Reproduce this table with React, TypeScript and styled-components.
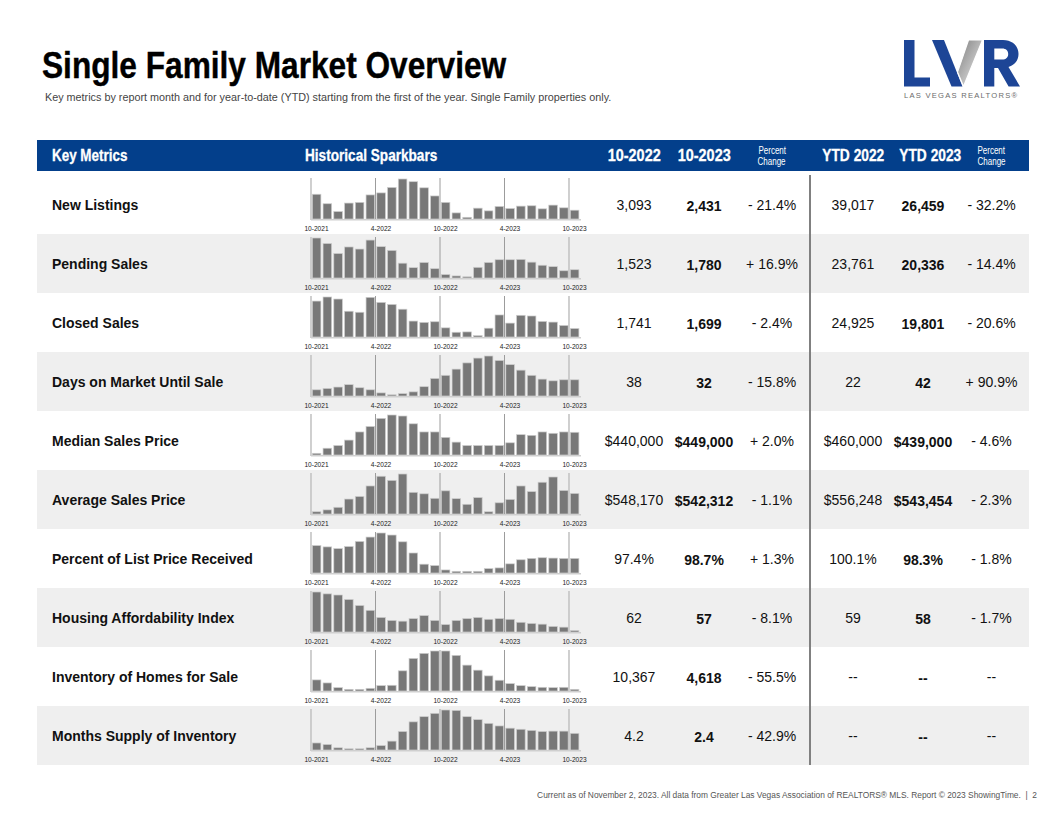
import React from "react";
import styled, { createGlobalStyle } from "styled-components";

const SANS = `"Liberation Sans", Arial, Helvetica, sans-serif`;
const BLUE = "#033f8b";

const Global = createGlobalStyle`
  html, body { margin: 0; padding: 0; background: #ffffff; }
  body { font-family: ${SANS}; color: #111; }
  * { box-sizing: border-box; }
`;

const Page = styled.div`
  width: 1064px;
  height: 816px;
  background: #fff;
  overflow: hidden;
`;

const TopBar = styled.header`
  height: 140px;
  display: flex;
  justify-content: space-between;
  align-items: flex-start;
  padding: 46px 42px 0 42px;
`;

const TitleBlock = styled.div`
  display: flex;
  flex-direction: column;
  align-items: flex-start;
`;

/* condensed type: the reference uses a condensed grotesque; we narrow Liberation Sans */
const Squeeze = styled.span<{ $s: number; $origin?: string }>`
  display: inline-block;
  transform: scaleX(${(p) => p.$s});
  transform-origin: ${(p) => p.$origin ?? "center"};
  white-space: nowrap;
`;

const Title = styled.h1`
  margin: 0;
  font-weight: 700;
  font-size: 37px;
  line-height: 40px;
  color: #000;
  white-space: nowrap;
  -webkit-text-stroke: 0.4px #000;
`;

const Subtitle = styled.p`
  margin: 5px 0 0 3px;
  font-size: 10.8px;
  line-height: 12px;
  color: #444;
  white-space: nowrap;
`;

const Logo = styled.div`
  display: flex;
  flex-direction: column;
  align-items: flex-start;
  margin-top: -6px;
`;

const LogoText = styled.div`
  margin: 4px 0 0 2px;
  font-size: 7.6px;
  line-height: 9px;
  letter-spacing: 1.25px;
  color: #6b6b6b;
  white-space: nowrap;
`;

const COLS = "263px 298px 72px 68px 68px 8px 78px 62px 75px";

const Table = styled.section`
  margin-left: 37px;
  width: 992px;
`;

const HeadRow = styled.div`
  display: grid;
  grid-template-columns: ${COLS};
  height: 31px;
  background: ${BLUE};
  color: #fff;
  align-items: center;
  margin-bottom: 4px;
`;

const HeadCell = styled.div<{ $align?: "left" | "center"; $pad?: number }>`
  font-weight: 700;
  font-size: 17px;
  text-align: ${(p) => p.$align ?? "center"};
  padding-left: ${(p) => p.$pad ?? 0}px;
  white-space: nowrap;
  padding-top: 1px;
  -webkit-text-stroke: 0.3px #fff;
`;

const HeadSmall = styled.div`
  font-size: 10px;
  line-height: 11px;
  text-align: center;
  margin-top: 0px;
`;

const Row = styled.div<{ $alt: boolean }>`
  display: grid;
  grid-template-columns: ${COLS};
  height: 59px;
  align-items: center;
  background: ${(p) => (p.$alt ? "#efefef" : "transparent")};
`;

const Label = styled.div`
  padding-left: 15px;
  padding-top: 1px;
  font-weight: 700;
  font-size: 14px;
  color: #111;
  white-space: nowrap;
`;

const Spark = styled.div`
  height: 59px;
`;

const Value = styled.div<{ $bold?: boolean }>`
  text-align: center;
  font-size: 14px;
  font-weight: ${(p) => (p.$bold ? 700 : 400)};
  color: #111;
  white-space: nowrap;
  padding-top: ${(p) => (p.$bold ? 3 : 0)}px;
`;

const Divider = styled.div`
  height: 100%;
  display: flex;
  justify-content: center;
`;

const DividerLine = styled.div`
  width: 2px;
  height: 100%;
  background: #808080;
`;

const Footer = styled.footer`
  margin-top: 25px;
  padding-right: 27px;
  text-align: right;
  font-size: 8.4px;
  color: #555;
  white-space: nowrap;
`;

type RowData = {
  label: string;
  bars: number[];
  v: [string, string, string, string, string, string];
};

const rows: RowData[] = [
  {
    label: "New Listings",
    bars: [73, 45, 22, 47, 49, 71, 77, 93, 118, 110, 92, 68, 49, 18, 5, 32, 24, 37, 31, 38, 39, 30, 41, 33, 26],
    v: ["3,093", "2,431", "- 21.4%", "39,017", "26,459", "- 32.2%"],
  },
  {
    label: "Pending Sales",
    bars: [116, 100, 71, 90, 84, 110, 91, 80, 43, 30, 45, 27, 10, 6, 3, 31, 45, 53, 53, 54, 46, 37, 33, 21, 24],
    v: ["1,523", "1,780", "+ 16.9%", "23,761", "20,336", "- 14.4%"],
  },
  {
    label: "Closed Sales",
    bars: [106, 118, 112, 76, 73, 117, 102, 96, 82, 47, 43, 45, 27, 14, 15, 4, 26, 65, 41, 64, 62, 46, 44, 34, 25],
    v: ["1,741", "1,699", "- 2.4%", "24,925", "19,801", "- 20.6%"],
  },
  {
    label: "Days on Market Until Sale",
    bars: [18, 22, 26, 33, 24, 18, 9, 3, 7, 12, 27, 51, 60, 78, 96, 110, 116, 103, 91, 75, 60, 49, 44, 47, 47],
    v: ["38", "32", "- 15.8%", "22", "42", "+ 90.9%"],
  },
  {
    label: "Median Sales Price",
    bars: [5, 20, 28, 44, 68, 84, 108, 118, 115, 92, 68, 68, 52, 38, 28, 28, 28, 28, 36, 60, 58, 68, 64, 68, 67],
    v: ["$440,000", "$449,000", "+ 2.0%", "$460,000", "$439,000", "- 4.6%"],
  },
  {
    label: "Average Sales Price",
    bars: [6, 11, 18, 40, 47, 75, 101, 90, 107, 58, 54, 42, 62, 41, 26, 44, 6, 30, 39, 75, 60, 85, 99, 63, 55],
    v: ["$548,170", "$542,312", "- 1.1%", "$556,248", "$543,454", "- 2.3%"],
  },
  {
    label: "Percent of List Price Received",
    bars: [81, 77, 72, 78, 93, 106, 118, 112, 92, 59, 26, 22, 9, 5, 5, 5, 13, 15, 27, 39, 43, 45, 44, 43, 43],
    v: ["97.4%", "98.7%", "+ 1.3%", "100.1%", "98.3%", "- 1.8%"],
  },
  {
    label: "Housing Affordability Index",
    bars: [107, 102, 99, 87, 71, 58, 39, 31, 29, 36, 44, 31, 20, 31, 36, 39, 34, 36, 34, 26, 23, 21, 15, 13, 4],
    v: ["62", "57", "- 8.1%", "59", "58", "- 1.7%"],
  },
  {
    label: "Inventory of Homes for Sale",
    bars: [33, 24, 10, 5, 5, 8, 16, 17, 60, 97, 112, 119, 119, 106, 77, 62, 45, 32, 22, 16, 13, 11, 10, 11, 5],
    v: ["10,367", "4,618", "- 55.5%", "--", "--", "--"],
  },
  {
    label: "Months Supply of Inventory",
    bars: [19, 15, 6, 3, 3, 6, 12, 24, 50, 76, 90, 99, 108, 107, 90, 82, 72, 65, 59, 56, 53, 50, 51, 51, 45],
    v: ["4.2", "2.4", "- 42.9%", "--", "--", "--"],
  },
];

const GRID_X = [11, 75.5, 140, 204.5, 269];
const TICKS = ["10-2021", "4-2022", "10-2022", "4-2023", "10-2023"];

function Sparkbars({ bars }: { bars: number[] }) {
  const max = Math.max(...bars);
  const base = 44;
  const full = 40;
  return (
    <svg width={298} height={59} viewBox="0 0 298 59">
      {GRID_X.map((x, i) => (
        <line
          key={"g" + i}
          x1={x}
          x2={x}
          y1={3}
          y2={base + 1}
          stroke={i === 0 || i === 4 ? "#c4c4c4" : "#9c9c9c"}
          strokeWidth={i === 0 || i === 4 ? 1.6 : 1}
        />
      ))}
      <line x1={11} x2={281} y1={base + 0.7} y2={base + 0.7} stroke="#cfcfcf" strokeWidth={1.4} />
      {bars.map((b, i) => {
        const h = Math.max(1.2, (b / max) * full);
        return (
          <rect
            key={i}
            x={12.3 + i * 10.75}
            y={base - h}
            width={8.6}
            height={h}
            fill="#787878"
            stroke="#cdcdcd"
            strokeWidth={0.7}
          />
        );
      })}
      {GRID_X.map((x, i) => (
        <text
          key={"t" + i}
          x={x + 5.5}
          y={56.3}
          textAnchor="middle"
          fontFamily={SANS}
          fontSize={6.6}
          fill="#222"
        >
          {TICKS[i]}
        </text>
      ))}
    </svg>
  );
}

function LvrLogo() {
  return (
    <svg width={120} height={47} viewBox="0 0 120 47">
      <defs>
        <linearGradient id="vgray" x1="0" y1="0" x2="1" y2="1">
          <stop offset="0" stopColor="#7d7d7d" />
          <stop offset="0.55" stopColor="#bdbdbd" />
          <stop offset="1" stopColor="#e6e6e6" />
        </linearGradient>
      </defs>
      <path d="M2 0 H12.5 V37.6 H28 V46.5 H2 Z" fill="#1d4596" />
      <path d="M30 0 H42 L60.5 46.5 H49.5 Z" fill="#1d4596" />
      <path d="M66.5 0 H80.5 L61.5 46.5 L55.5 32 Z" fill="url(#vgray)" stroke="#fff" strokeWidth={1.2} />
      <path
        fillRule="evenodd"
        fill="#1d4596"
        d="M82 0 H101 C110.5 0 116.5 6 116.5 14 C116.5 20.5 112.6 25.2 106.5 27 L118 46.5 H106.6 L96 28 H92.3 V46.5 H82 Z M92.3 8.6 H100.2 C104 8.6 106.2 10.8 106.2 14 C106.2 17.4 104 19.6 100.2 19.6 H92.3 Z"
      />
    </svg>
  );
}

function PctHead() {
  return (
    <HeadSmall>
      <Squeeze $s={0.8}>Percent</Squeeze>
      <br />
      <Squeeze $s={0.8}>Change</Squeeze>
    </HeadSmall>
  );
}

export default function App() {
  return (
    <Page>
      <Global />
      <TopBar>
        <TitleBlock>
          <Title>
            <Squeeze $s={0.855} $origin="left">
              Single Family Market Overview
            </Squeeze>
          </Title>
          <Subtitle>
            Key metrics by report month and for year-to-date (YTD) starting from the first of the year. Single Family
            properties only.
          </Subtitle>
        </TitleBlock>
        <Logo>
          <LvrLogo />
          <LogoText>LAS VEGAS REALTORS®</LogoText>
        </Logo>
      </TopBar>
      <Table>
        <HeadRow>
          <HeadCell $align="left" $pad={15}>
            <Squeeze $s={0.79} $origin="left">Key Metrics</Squeeze>
          </HeadCell>
          <HeadCell $align="left" $pad={5}>
            <Squeeze $s={0.8} $origin="left">Historical Sparkbars</Squeeze>
          </HeadCell>
          <HeadCell>
            <Squeeze $s={0.85}>10-2022</Squeeze>
          </HeadCell>
          <HeadCell>
            <Squeeze $s={0.85}>10-2023</Squeeze>
          </HeadCell>
          <PctHead />
          <div />
          <HeadCell>
            <Squeeze $s={0.81}>YTD 2022</Squeeze>
          </HeadCell>
          <HeadCell>
            <Squeeze $s={0.81}>YTD 2023</Squeeze>
          </HeadCell>
          <PctHead />
        </HeadRow>
        {rows.map((r, i) => (
          <Row key={r.label} $alt={i % 2 === 1}>
            <Label>{r.label}</Label>
            <Spark>
              <Sparkbars bars={r.bars} />
            </Spark>
            <Value>{r.v[0]}</Value>
            <Value $bold>{r.v[1]}</Value>
            <Value>{r.v[2]}</Value>
            <Divider>
              <DividerLine />
            </Divider>
            <Value>{r.v[3]}</Value>
            <Value $bold>{r.v[4]}</Value>
            <Value>{r.v[5]}</Value>
          </Row>
        ))}
      </Table>
      <Footer>
        Current as of November 2, 2023. All data from Greater Las Vegas Association of REALTORS® MLS. Report © 2023
        ShowingTime.&nbsp; |&nbsp; 2
      </Footer>
    </Page>
  );
}
